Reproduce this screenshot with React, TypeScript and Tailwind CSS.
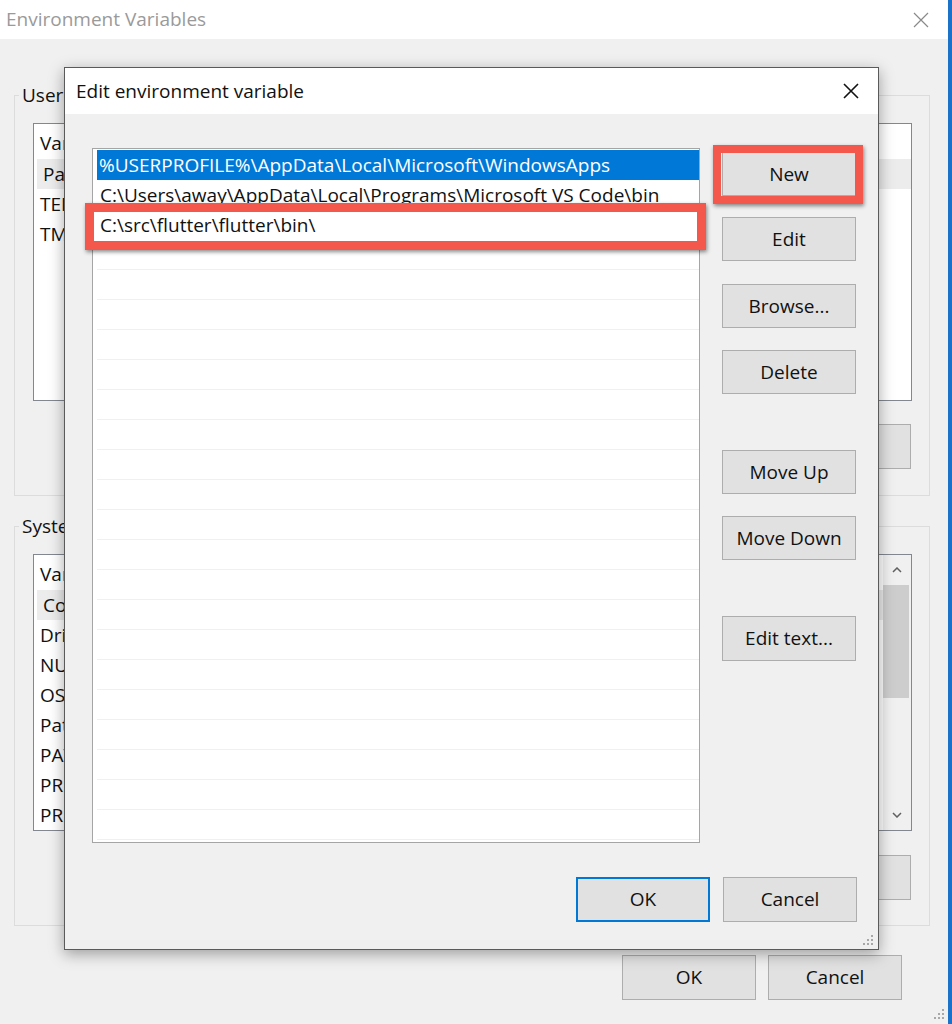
import React from "react";

const FONT = "font-['Segoe_UI','Open_Sans','Noto_Sans',sans-serif]";

function WinButton({
  label,
  className = "",
  focused = false,
}: {
  label: string;
  className?: string;
  focused?: boolean;
}) {
  return (
    <div
      className={`flex items-center justify-center bg-[#e1e1e1] text-[19px] text-[#111] ${
        focused ? "border-2 border-[#0078d7]" : "border border-[#adadad]"
      } ${className}`}
    >
      {label}
    </div>
  );
}

function Grip({ className = "" }: { className?: string }) {
  const dots: [number, number][] = [
    [9, 1],
    [5, 5],
    [9, 5],
    [1, 9],
    [5, 9],
    [9, 9],
  ];
  return (
    <svg width="12" height="12" viewBox="0 0 12 12" className={className}>
      {dots.map(([x, y], i) => (
        <rect key={i} x={x} y={y} width="2" height="2" fill="#a8a8a8" />
      ))}
    </svg>
  );
}

function CloseIcon({ color, size, stroke }: { color: string; size: number; stroke: number }) {
  return (
    <svg width={size} height={size} viewBox="0 0 16 16">
      <path d="M1 1 L15 15 M15 1 L1 15" stroke={color} strokeWidth={stroke} fill="none" />
    </svg>
  );
}

const userRows = ["Path", "TEMP", "TMP"];
const systemRows = [
  "ComSpec",
  "DriverData",
  "NUMBER_OF_PROCESSORS",
  "OS",
  "Path",
  "PATHEXT",
  "PROCESSOR_ARCHITECTURE",
  "PROCESSOR_IDENTIFIER",
];

function VarList({
  rows,
  heightClass,
  scroll,
}: {
  rows: string[];
  heightClass: string;
  scroll?: boolean;
}) {
  return (
    <div className={`ml-[18px] mr-[17px] mt-[16px] ${heightClass} border border-[#828790] bg-white flex overflow-hidden`}>
      <div className="flex-1 flex flex-col pt-[4px]">
        <div className="h-[30px] flex items-center pl-[6px] text-[19px] text-[#111]">
          <span className="w-[240px]">Variable</span>
          <span>Value</span>
        </div>
        {rows.map((r, i) => (
          <div
            key={r + i}
            className={`h-[30px] flex items-center pl-[6px] text-[19px] text-[#111] ${
              i === 0 ? "mt-[1px] ml-[3px] pl-[3px] bg-[#ececec]" : ""
            }`}
          >
            {r}
          </div>
        ))}
      </div>
      {scroll && (
        <div className="w-[28px] bg-[#f0f0f0] flex flex-col items-center">
          <div className="h-[30px] flex items-center justify-center">
            <svg width="10" height="6" viewBox="0 0 10 6">
              <path d="M1 5 L5 1 L9 5" stroke="#606060" strokeWidth="1.5" fill="none" />
            </svg>
          </div>
          <div className="w-[26px] h-[113px] bg-[#cdcdcd] mr-[2px]" />
          <div className="flex-1" />
          <div className="h-[30px] flex items-center justify-center">
            <svg width="10" height="6" viewBox="0 0 10 6">
              <path d="M1 1 L5 5 L9 1" stroke="#606060" strokeWidth="1.5" fill="none" />
            </svg>
          </div>
        </div>
      )}
    </div>
  );
}

function BackgroundWindow() {
  return (
    <div className="w-[948px] h-[1024px] flex flex-col bg-[#f0f0f0]">
      <div className="h-[39px] bg-white flex items-center justify-between pl-[6px] pr-[19px]">
        <span className="text-[19px] text-[#9a9a9a]">Environment Variables</span>
        <CloseIcon color="#8a8a8a" size={16} stroke={1.2} />
      </div>

      <fieldset className="ml-[14px] w-[916px] mt-[44px] border border-[#dcdcdc] h-[413px] flex flex-col">
        <legend className="ml-[4px] px-[3px] max-w-[48px] overflow-hidden whitespace-nowrap text-[19px] leading-[24px] text-[#111]">
          User variables for away
        </legend>
        <VarList rows={userRows} heightClass="h-[278px]" />
        <div className="flex justify-end gap-[13px] mr-[18px] mt-[23px]">
          <WinButton label="New..." className="w-[131px] h-[45px]" />
          <WinButton label="Edit..." className="w-[131px] h-[45px]" />
          <WinButton label="Delete" className="w-[131px] h-[45px] bg-[#cccccc]" />
        </div>
      </fieldset>

      <fieldset className="ml-[14px] w-[916px] mt-[18px] border border-[#dcdcdc] h-[412px] flex flex-col">
        <legend className="ml-[4px] px-[3px] max-w-[48px] overflow-hidden whitespace-nowrap text-[19px] leading-[24px] text-[#111]">
          System variables
        </legend>
        <VarList rows={systemRows} heightClass="h-[277px]" scroll />
        <div className="flex justify-end gap-[13px] mr-[18px] mt-[24px]">
          <WinButton label="New..." className="w-[131px] h-[45px]" />
          <WinButton label="Edit..." className="w-[131px] h-[45px]" />
          <WinButton label="Delete" className="w-[131px] h-[45px] bg-[#cccccc]" />
        </div>
      </fieldset>

      <div className="flex justify-end gap-[12px] mr-[46px] mt-[29px]">
        <WinButton label="OK" className="w-[134px] h-[45px]" />
        <WinButton label="Cancel" className="w-[134px] h-[45px]" />
      </div>
      <div className="flex-1 flex items-end justify-end pr-[3px] pb-[4px]">
        <Grip />
      </div>
    </div>
  );
}

const pathRows = [
  "%USERPROFILE%\\AppData\\Local\\Microsoft\\WindowsApps",
  "C:\\Users\\away\\AppData\\Local\\Programs\\Microsoft VS Code\\bin",
];

function EditDialog() {
  const empty = Array.from({ length: 20 }, (_, i) => i);
  return (
    <div className="absolute left-[64px] top-[67px] w-[815px] h-[883px] border border-[#5a5a5a] bg-[#f0f0f0] shadow-[0_4px_14px_rgba(0,0,0,0.35)] flex flex-col">
      <div className="h-[46px] bg-white flex items-center justify-between pl-[11px] pr-[19px]">
        <span className="text-[19px] text-[#111]">Edit environment variable</span>
        <CloseIcon color="#111" size={16} stroke={1.6} />
      </div>

      <div className="flex pl-[27px] pt-[34px]">
        <div className="w-[608px] h-[695px] border border-[#a5a5a5] bg-white overflow-hidden pl-[4px] pt-[1px]">
          <div className="h-[30px] flex items-center px-[2px] bg-[#0078d7] text-white text-[19px] whitespace-nowrap">
            {pathRows[0]}
          </div>
          <div className="h-[30px] flex items-center px-[3px] text-[#111] text-[19px] whitespace-nowrap">
            {pathRows[1]}
          </div>
          <div className="h-[30px] flex items-center px-[3px] text-[#111] text-[19px] whitespace-nowrap bg-white">
            C:\src\flutter\flutter\bin\
          </div>
          {empty.map((i) => (
            <div key={i} className="h-[30px] border-b border-[#f0f0f0]" />
          ))}
        </div>

        <div className="ml-[22px] pt-[4px] flex flex-col">
          <WinButton label="New" className="w-[134px] h-[44px]" />
          <WinButton label="Edit" className="w-[134px] h-[44px] mt-[21px]" />
          <WinButton label="Browse..." className="w-[134px] h-[44px] mt-[23px]" />
          <WinButton label="Delete" className="w-[134px] h-[44px] mt-[22px]" />
          <WinButton label="Move Up" className="w-[134px] h-[44px] mt-[56px]" />
          <WinButton label="Move Down" className="w-[134px] h-[44px] mt-[22px]" />
          <WinButton label="Edit text..." className="w-[134px] h-[45px] mt-[56px]" />
        </div>
      </div>

      <div className="flex justify-end gap-[13px] pr-[21px] mt-[34px]">
        <WinButton label="OK" className="w-[134px] h-[45px]" focused />
        <WinButton label="Cancel" className="w-[134px] h-[45px]" />
      </div>
      <div className="flex-1 flex items-end justify-end pr-[4px] pb-[3px]">
        <Grip />
      </div>

      {/* callout frames drawn over the dialog */}
      <div className="absolute left-[20px] top-[135px] w-[621px] h-[47px] border-[9px] border-[#f4574b] shadow-[1px_2px_4px_rgba(0,0,0,0.45)]" />
      <div className="absolute left-[648px] top-[77px] w-[150px] h-[59px] border-[8px] border-[#f4574b] shadow-[1px_2px_4px_rgba(0,0,0,0.45)]" />
    </div>
  );
}

export default function App() {
  return (
    <div className={`relative w-[952px] h-[1024px] overflow-hidden flex ${FONT}`}>
      <BackgroundWindow />
      <div className="w-[4px] bg-[#1a73c8]" />
      <EditDialog />
    </div>
  );
}
